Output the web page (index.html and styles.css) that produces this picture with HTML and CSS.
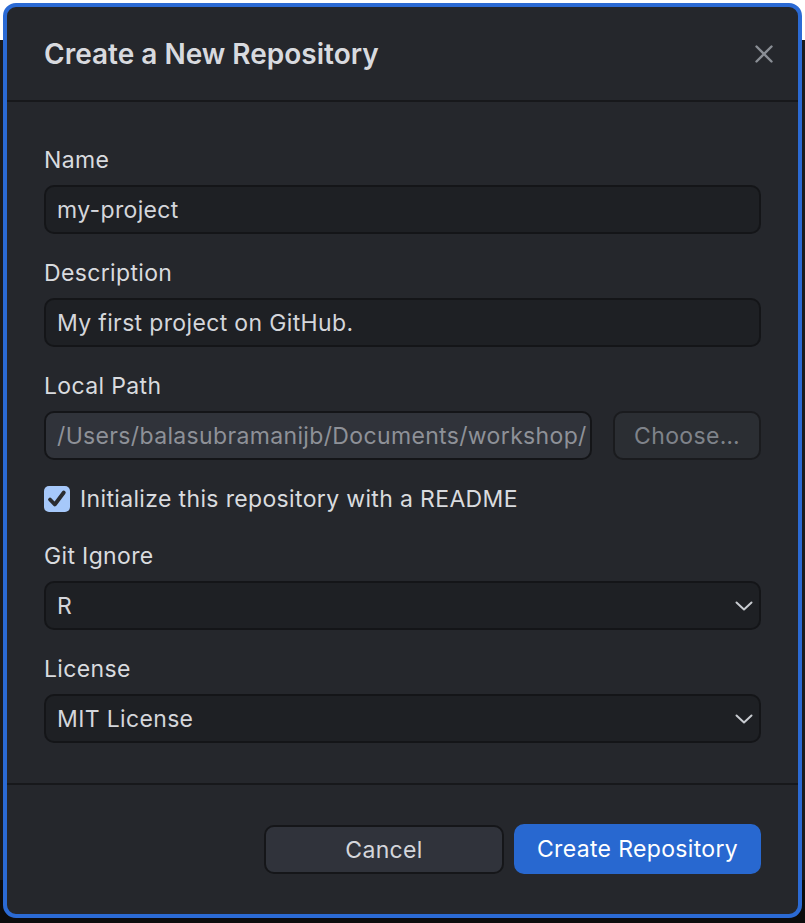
FILE: index.html
```html
<!DOCTYPE html>
<html lang="en">
<head>
<meta charset="utf-8">
<title>Create a New Repository</title>
<link rel="stylesheet" href="styles.css">
</head>
<body>
<div class="dialog">
  <header class="dialog-header">
    <h1 class="dialog-title">Create a New Repository</h1>
    <button class="close-btn" aria-label="Close">
      <svg width="18" height="18" viewBox="0 0 18 18"><path d="M1.5 1.5 L16.5 16.5 M16.5 1.5 L1.5 16.5" stroke="currentColor" stroke-width="2.4" stroke-linecap="round"/></svg>
    </button>
  </header>
  <div class="dialog-body">
    <div class="field">
      <label class="field-label">Name</label>
      <div class="text-input">my-project</div>
    </div>
    <div class="field">
      <label class="field-label">Description</label>
      <div class="text-input">My first project on GitHub.</div>
    </div>
    <div class="field">
      <label class="field-label">Local Path</label>
      <div class="path-row">
        <div class="text-input path-input">/Users/balasubramanijb/Documents/workshop/</div>
        <div class="choose-btn">Choose…</div>
      </div>
    </div>
    <div class="check-row">
      <span class="checkbox">
        <svg width="22" height="22" viewBox="0 0 22 22"><path d="M4 11.5 L8.8 16.5 L17.8 4.5" fill="none" stroke="#2a2c30" stroke-width="3.8" stroke-linecap="round" stroke-linejoin="round"/></svg>
      </span>
      <span class="check-label">Initialize this repository with a README</span>
    </div>
    <div class="field">
      <label class="field-label">Git Ignore</label>
      <div class="text-input select">
        <span>R</span>
        <svg class="chevron" width="18" height="10" viewBox="0 0 18 10"><path d="M1.5 1.5 L9 8.5 L16.5 1.5" fill="none" stroke="currentColor" stroke-width="2" stroke-linecap="round" stroke-linejoin="round"/></svg>
      </div>
    </div>
    <div class="field">
      <label class="field-label">License</label>
      <div class="text-input select">
        <span>MIT License</span>
        <svg class="chevron" width="18" height="10" viewBox="0 0 18 10"><path d="M1.5 1.5 L9 8.5 L16.5 1.5" fill="none" stroke="currentColor" stroke-width="2" stroke-linecap="round" stroke-linejoin="round"/></svg>
      </div>
    </div>
  </div>
  <footer class="dialog-footer">
    <button class="btn btn-secondary">Cancel</button>
    <button class="btn btn-primary">Create Repository</button>
  </footer>
</div>
</body>
</html>
```

FILE: styles.css
```css
* { box-sizing: border-box; }

html, body {
  margin: 0;
  padding: 0;
}

body {
  width: 805px;
  height: 923px;
  background: linear-gradient(#ffffff 0 40px, #1a1b1e 40px 880px, #0c0c0d 880px);
  padding: 3px 3px 5px 3px;
  font-family: Inter, "Noto Sans", "Liberation Sans", sans-serif;
  overflow: hidden;
}

.dialog {
  width: 799px;
  height: 915px;
  border: 4px solid #2b6ad4;
  border-radius: 13px;
  background: #25272c;
  display: flex;
  flex-direction: column;
  color: #d9dbdf;
}

.dialog-header {
  height: 95px;
  display: flex;
  align-items: center;
  justify-content: space-between;
  padding: 0 25px 0 37px;
  border-bottom: 2px solid #17181b;
  flex-shrink: 0;
}

.dialog-title {
  margin: 0;
  font-size: 28px;
  font-weight: 600;
  color: #d8dadf;
  letter-spacing: 0;
}

.close-btn {
  background: none;
  border: 0;
  padding: 0;
  color: #8a8e95;
  display: flex;
  width: 18px;
  height: 18px;
}

.dialog-body {
  flex: 1;
  display: flex;
  flex-direction: column;
  gap: 26px;
  padding: 45px 37px 0 37px;
  border-bottom: 2px solid #17181b;
}

.field {
  display: flex;
  flex-direction: column;
  gap: 12px;
}

.field-label,
.text-input,
.choose-btn,
.check-label,
.btn {
  font-size: 23px;
  letter-spacing: 0.35px;
}

.field-label {
  line-height: 26px;
  color: #d9dbdf;
}

.text-input {
  height: 49px;
  border: 2px solid #141518;
  border-radius: 10px;
  background: #1e2024;
  padding: 0 11px;
  display: flex;
  align-items: center;
  color: #d4d6db;
  white-space: nowrap;
  overflow: hidden;
}

.path-row {
  display: flex;
  gap: 21px;
}

.path-input {
  flex: 1;
  background: #30333a;
  color: #8e9198;
  padding-right: 2px;
}

.choose-btn {
  width: 148px;
  height: 49px;
  border: 2px solid #1a1b1e;
  border-radius: 10px;
  background: #2b2e33;
  color: #7f838a;
  display: flex;
  align-items: center;
  justify-content: center;
  flex-shrink: 0;
}

.check-row {
  display: flex;
  align-items: center;
  gap: 10px;
  height: 26px;
  margin-bottom: 5px;
}

.checkbox {
  width: 26px;
  height: 26px;
  border-radius: 5px;
  background: #a6c8fa;
  display: flex;
  align-items: center;
  justify-content: center;
}

.check-label {
  color: #d9dbdf;
}

.select {
  justify-content: space-between;
  padding-right: 6px;
}

.chevron {
  color: #c8cbd0;
}

.dialog-footer {
  height: 129px;
  display: flex;
  justify-content: flex-end;
  align-items: flex-start;
  gap: 10px;
  padding: 40px 37px 0 0;
  flex-shrink: 0;
}

.btn {
  height: 49px;
  border-radius: 10px;
  font-family: inherit;
  display: flex;
  align-items: center;
  justify-content: center;
}

.btn-secondary {
  width: 240px;
  background: #30333b;
  border: 2px solid #151619;
  color: #d4d6db;
}

.btn-primary {
  width: 247px;
  height: 50px;
  margin-top: -1px;
  background: #2868d0;
  border: 0;
  color: #ffffff;
}
```
